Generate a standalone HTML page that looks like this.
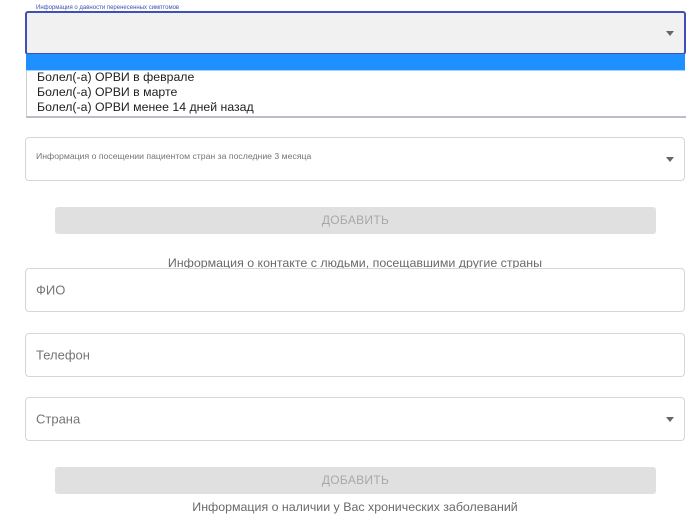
<!DOCTYPE html>
<html><head><meta charset="utf-8"><style>
body{margin:0;width:700px;height:522px;background:#fff;font-family:"Liberation Sans",sans-serif;position:relative;overflow:hidden}
.a{position:absolute}
.box{position:absolute;left:25px;width:658px;border:1px solid #d6d6d6;border-radius:4px;background:#fff}
.ph{position:absolute;left:10px;top:50%;transform:translateY(-50%);font-size:13px;color:#757575}
.arr{position:absolute;right:10px;top:50%;margin-top:-2px;width:0;height:0;border-left:4px solid transparent;border-right:4px solid transparent;border-top:5px solid #666}
.btn{position:absolute;left:55px;width:601px;height:27px;background:#e0e0e0;border-radius:3px;color:#a8a8a8;font-size:12px;text-align:center;line-height:27px;letter-spacing:.3px}
.h{position:absolute;left:0;width:710px;text-align:center;font-size:12.4px;color:#6a6a6a}
</style></head><body>
<div class="a" style="left:36px;top:5px;font-size:6px;color:#3f51b5">Информация о давности перенесенных симптомов</div>
<div class="a" style="left:25px;top:11px;width:657px;height:40px;border:2px solid #4050b5;border-radius:3px;background:#f1f1f1"><div class="arr"></div></div>
<div class="a" style="left:26px;top:54px;width:659px;height:16px;background:#1e90ff;border-bottom:1px solid #9fd0ff"></div>
<div class="a" style="left:26px;top:71px;width:659px;height:45px;border-left:1px solid #ccc;border-bottom:2px solid #b9bec9"></div>
<div class="a" style="left:37px;top:70px;font-size:12.3px;line-height:15px;color:#222">Болел(-а) ОРВИ в феврале<br>Болел(-а) ОРВИ в марте<br>Болел(-а) ОРВИ менее 14 дней назад</div>
<div class="box" style="top:137px;height:42px"><span class="ph" style="font-size:8.7px;margin-top:-3px">Информация о посещении пациентом стран за последние 3 месяца</span><div class="arr"></div></div>
<div class="btn" style="top:207px">ДОБАВИТЬ</div>
<div class="h" style="top:256px">Информация о контакте с людьми, посещавшими другие страны</div>
<div class="box" style="top:268px;height:42px"><span class="ph">ФИО</span></div>
<div class="box" style="top:333px;height:42px"><span class="ph">Телефон</span></div>
<div class="box" style="top:397px;height:42px"><span class="ph">Страна</span><div class="arr"></div></div>
<div class="btn" style="top:467px">ДОБАВИТЬ</div>
<div class="h" style="top:500px">Информация о наличии у Вас хронических заболеваний</div>
</body></html>
